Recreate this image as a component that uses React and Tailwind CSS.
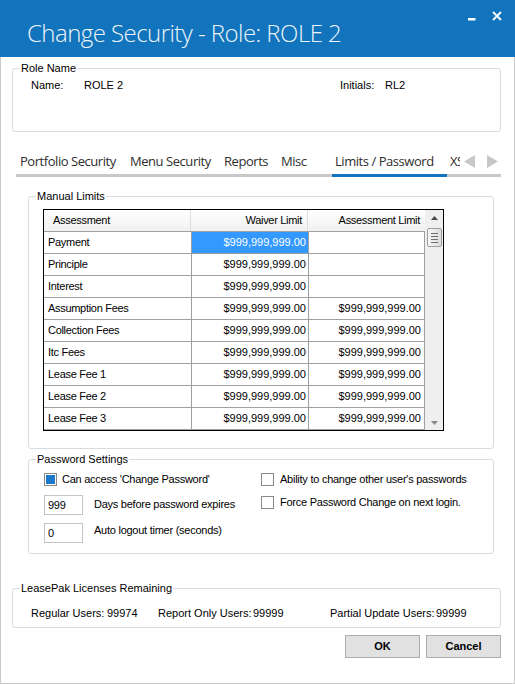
import React from 'react';

const rows = [
  ['Payment', '$999,999,999.00', ''],
  ['Principle', '$999,999,999.00', ''],
  ['Interest', '$999,999,999.00', ''],
  ['Assumption Fees', '$999,999,999.00', '$999,999,999.00'],
  ['Collection Fees', '$999,999,999.00', '$999,999,999.00'],
  ['Itc Fees', '$999,999,999.00', '$999,999,999.00'],
  ['Lease Fee 1', '$999,999,999.00', '$999,999,999.00'],
  ['Lease Fee 2', '$999,999,999.00', '$999,999,999.00'],
  ['Lease Fee 3', '$999,999,999.00', '$999,999,999.00'],
];

const tabs = [
  { label: 'Portfolio Security', w: 'w-[110px]' },
  { label: 'Menu Security', w: 'w-[94px]' },
  { label: 'Reports', w: 'w-[57px]' },
  { label: 'Misc', w: 'w-[54px]' },
  { label: 'Limits / Password', w: 'w-[115px]', active: true },
];

const Group = ({ title, className = '', children }) => (
  <fieldset className={`border border-[#d6dce2] rounded-[3px] p-0 ${className}`}>
    <legend className="ml-[7px] px-[1px] text-[11px] leading-[13px]">{title}</legend>
    {children}
  </fieldset>
);

const Check = ({ checked }) => (
  <div className="w-[13px] h-[13px] border border-[#8a8a8a] bg-white p-[1px] shrink-0">
    {checked && <div className="w-full h-full bg-[#1c78c8]"></div>}
  </div>
);

const Field = ({ value }) => (
  <div className="w-[39px] h-[20px] border border-[#c3c3c3] bg-white pl-[3px] flex items-center shrink-0">
    {value}
  </div>
);

const App = () => {
  return (
    <div className="w-[515px] h-[684px] flex flex-col bg-white text-black text-[11px] leading-[13px] font-['Liberation_Sans',Arial,sans-serif]">
      {/* title bar */}
      <div className="h-[57px] bg-[#1174bc] flex justify-between shrink-0">
        <div className="pl-[27px] pt-[16px] text-[24px] leading-[34px] font-light tracking-[-0.55px] text-[#eef4fa] font-['Open_Sans',sans-serif] whitespace-nowrap">
          Change Security - Role: ROLE 2
        </div>
        <div className="flex items-start gap-[16px] pr-[13px] pt-[11px]">
          <svg width="8" height="10" viewBox="0 0 8 10">
            <rect x="0" y="7" width="7.5" height="2.5" fill="#ffffff" />
          </svg>
          <svg width="10" height="10" viewBox="0 0 10 10">
            <path d="M1 1 L9 9 M9 1 L1 9" stroke="#ffffff" strokeWidth="1.8" />
          </svg>
        </div>
      </div>

      {/* body */}
      <div className="flex-1 flex flex-col border-x border-b border-[#cacaca]">
        <Group title="Role Name" className="ml-[11px] mt-[5px] w-[489px] h-[70px]">
          <div className="flex pt-[4px]">
            <span className="ml-[18px] w-[53px]">Name:</span>
            <span className="w-[256px]">ROLE 2</span>
            <span className="w-[45px]">Initials:</span>
            <span>RL2</span>
          </div>
        </Group>

        {/* tabs */}
        <div className="ml-[15px] mt-[17px] w-[485px] flex flex-col font-['Open_Sans',sans-serif]">
          <div className="flex h-[24px] items-center text-[13px] tracking-[-0.45px] text-[#2e2e2e] whitespace-nowrap">
            {tabs.map((t) => (
              <div key={t.label} className={`${t.w} pl-[4px] shrink-0`}>
                {t.label}
              </div>
            ))}
            <div className="w-[14px] pl-[4px] overflow-hidden shrink-0">XSS</div>
            <div className="flex items-center gap-[12px] ml-[4px]">
              <svg width="11" height="13" viewBox="0 0 11 13"><path d="M11 0 L0 6.5 L11 13 Z" fill="#c7c7c7" /></svg>
              <svg width="11" height="13" viewBox="0 0 11 13"><path d="M0 0 L11 6.5 L0 13 Z" fill="#c7c7c7" /></svg>
            </div>
          </div>
          <div className="mt-[1px] h-[3px] bg-[#c8c8c8] flex">
            <div className="ml-[316px] w-[115px] bg-[#1174bc]"></div>
          </div>
        </div>

        {/* manual limits */}
        <Group title="Manual Limits" className="ml-[27px] mt-[13px] w-[466px] h-[259px]">
          <div className="ml-[14px] mt-[6px] w-[401px] border border-black flex">
            <div className="flex flex-col">
              <div className="flex h-[22px] border-b border-[#a0a0a0] bg-gradient-to-b from-white to-[#f0f0f0] tracking-[-0.3px]">
                <div className="w-[147px] border-r border-[#dcdcdc] pl-[9px] flex items-center">Assessment</div>
                <div className="w-[117px] border-r border-[#dcdcdc] pr-[5px] flex items-center justify-end">Waiver Limit</div>
                <div className="w-[117px] pr-[5px] flex items-center justify-end">Assessment Limit</div>
              </div>
              {rows.map((r, i) => (
                <div key={r[0]} className="flex h-[22px] border-b border-[#a0a0a0]">
                  <div className="w-[148px] border-r border-[#a0a0a0] pl-[4px] flex items-center tracking-[-0.3px]">{r[0]}</div>
                  <div className={`w-[117px] border-r border-[#a0a0a0] pr-[2px] flex items-center justify-end ${i === 0 ? 'bg-[#3399ff] text-white' : ''}`}>{r[1]}</div>
                  <div className="w-[116px] border-r border-[#a0a0a0] pr-[3px] flex items-center justify-end">{r[2]}</div>
                </div>
              ))}
            </div>
            {/* scrollbar */}
            <div className="flex-1 bg-[#efefef] flex flex-col items-center justify-between pb-[5px]">
              <div className="flex flex-col items-center w-full">
                <svg width="7" height="4" viewBox="0 0 7 4" className="mt-[6px]"><path d="M0 4 L3.5 0 L7 4 Z" fill="#4a4a4a" /></svg>
                <div className="mt-[8px] w-[15px] h-[19px] border border-[#9e9e9e] rounded-[2px] bg-gradient-to-r from-[#f6f6f6] to-[#dcdcdc] flex flex-col items-center justify-center gap-[2px]">
                  <div className="w-[7px] h-[1px] bg-[#6f6f6f]"></div>
                  <div className="w-[7px] h-[1px] bg-[#6f6f6f]"></div>
                  <div className="w-[7px] h-[1px] bg-[#6f6f6f]"></div>
                  <div className="w-[7px] h-[1px] bg-[#6f6f6f]"></div>
                </div>
              </div>
              <svg width="7" height="4" viewBox="0 0 7 4"><path d="M0 0 L3.5 4 L7 0 Z" fill="#8a8a8a" /></svg>
            </div>
          </div>
        </Group>

        {/* password settings */}
        <Group title="Password Settings" className="ml-[27px] mt-[4px] w-[466px] h-[101px]">
          <div className="flex pt-[7px] tracking-[-0.25px]">
            <div className="ml-[15px] w-[217px] flex flex-col">
              <div className="flex items-center h-[13px]">
                <Check checked />
                <span className="ml-[5px]">Can access 'Change Password'</span>
              </div>
              <div className="flex items-center mt-[9px]">
                <Field value="999" />
                <span className="ml-[11px] -mt-[1px]">Days before password expires</span>
              </div>
              <div className="flex items-start mt-[8px]">
                <Field value="0" />
                <span className="ml-[11px] mt-[1px]">Auto logout timer (seconds)</span>
              </div>
            </div>
            <div className="flex flex-col">
              <div className="flex items-center h-[13px]">
                <Check />
                <span className="ml-[6px]">Ability to change other user's passwords</span>
              </div>
              <div className="flex items-center h-[13px] mt-[10px]">
                <Check />
                <span className="ml-[6px]">Force Password Change on next login.</span>
              </div>
            </div>
          </div>
        </Group>

        {/* licenses */}
        <Group title="LeasePak Licenses Remaining" className="ml-[11px] mt-[28px] w-[489px] h-[46px]">
          <div className="flex pt-[12px]">
            <span className="ml-[18px] w-[76px]">Regular Users:</span>
            <span className="w-[51px]">99974</span>
            <span className="w-[95px]">Report Only Users:</span>
            <span className="w-[77px]">99999</span>
            <span className="w-[106px]">Partial Update Users:</span>
            <span>99999</span>
          </div>
        </Group>

        {/* buttons */}
        <div className="flex justify-end gap-[6px] mr-[13px] mt-[7px]">
          <button className="w-[75px] h-[23px] bg-[#e1e1e1] border border-[#adadad] font-bold text-[11px]">OK</button>
          <button className="w-[75px] h-[23px] bg-[#e1e1e1] border border-[#adadad] font-bold text-[11px]">Cancel</button>
        </div>
      </div>
    </div>
  );
};

export default App;
